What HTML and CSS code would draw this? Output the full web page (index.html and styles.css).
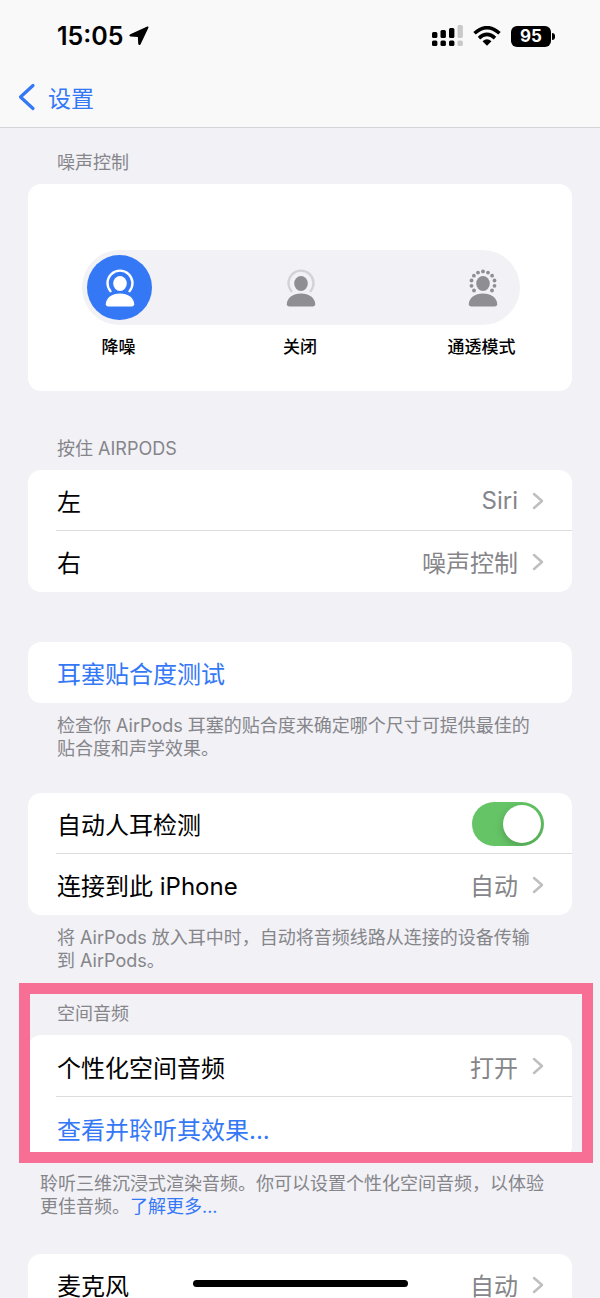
FILE: index.html
```html
<!DOCTYPE html>
<html lang="zh-CN">
<head>
<meta charset="utf-8">
<meta name="viewport" content="width=device-width, initial-scale=1">
<title>AirPods</title>
<link rel="stylesheet" href="styles.css">
</head>
<body>
<svg class="defs" aria-hidden="true">
  <symbol id="chevron" viewBox="0 0 12 18"><path d="M2 2l8 7-8 7" fill="none" stroke="currentColor" stroke-width="2.500" stroke-linecap="round" stroke-linejoin="round"/></symbol>
  <symbol id="person" viewBox="0 0 30 40">
    <ellipse cx="15" cy="15.500" rx="6.800" ry="7.400"/>
    <path d="M.8 36.300C.8 30 7 25.500 15 25.500s14.200 4.500 14.200 10.800Q29.200 38.400 27 38.400H3Q.8 38.400.8 36.300z"/>
  </symbol>
  <symbol id="arc" viewBox="0 0 30 40"><path d="M5.500 23.200A12.500 12.500 0 1 1 24.500 23.200" fill="none" stroke="currentColor" stroke-width="2.400" stroke-linecap="round"/></symbol>
</svg>
<div class="screen">
  <header class="top">
    <div class="status">
      <div class="clock">
        <time>15:05</time>
        <svg width="20" height="20" viewBox="0 0 20 20" aria-hidden="true"><path d="M18.300.6L1.300 8.200Q-.8 9.700 1.600 10.600L8.900 10.900 9.200 17.800Q10 20.200 11.600 18.200L19.400 1.700Q19.800.1 18.300.6z"/></svg>
      </div>
      <div class="signals">
        <svg width="32" height="22" viewBox="0 0 32 22" aria-hidden="true">
          <rect x="1" y="7" width="5.400" height="6" rx="1.500"/><rect x="9.500" y="5" width="5.400" height="8" rx="1.500"/><rect x="18" y="3" width="5.400" height="10" rx="1.500"/><rect x="26.500" y="0" width="5.400" height="13" rx="1.500" fill="#c9c9ca"/>
          <rect x="1" y="15.500" width="5.400" height="5.500" rx="1.500"/><rect x="9.500" y="15.500" width="5.400" height="5.500" rx="1.500"/><rect x="18" y="15.500" width="5.400" height="5.500" rx="1.500"/><rect x="26.500" y="15.500" width="5.400" height="5.500" rx="1.500" fill="#c9c9ca"/>
        </svg>
        <svg width="28" height="20" viewBox="0 0 28 20" aria-hidden="true">
          <g fill="none" stroke="#000" stroke-width="3.500"><path d="M1.500 7.300Q14-4 26.500 7.300"/><path d="M6 12.100Q14 4.800 22 12.100"/></g>
          <path d="M9.500 15.200Q14 11.400 18.500 15.200L14 19.800z"/>
        </svg>
        <div class="battery">95</div>
      </div>
    </div>
    <a class="back" href="#">
      <svg width="18" height="28" viewBox="0 0 18 28" aria-hidden="true"><path d="M15 2.500L2.500 14 15 25.500" fill="none" stroke="currentColor" stroke-width="3.200" stroke-linecap="round" stroke-linejoin="round"/></svg>
      <span>设置</span>
    </a>
  </header>

  <main class="content">
    <section class="group">
      <h2 class="heading">噪声控制</h2>
      <div class="card modes">
        <div class="pill">
          <label class="mode" for="anc"><input type="radio" name="mode" id="anc" checked>
            <svg viewBox="0 0 30 40" aria-hidden="true"><use href="#person"/><use href="#arc"/></svg></label>
          <label class="mode" for="off"><input type="radio" name="mode" id="off">
            <svg viewBox="0 0 30 40" aria-hidden="true"><use href="#person"/><use class="faint" href="#arc"/></svg></label>
          <label class="mode" for="clear"><input type="radio" name="mode" id="clear">
            <svg viewBox="0 0 30 40" aria-hidden="true"><use href="#person"/>
              <circle cx="6" cy="22.500" r="1.900"/><circle cx="3.500" cy="17.800" r="1.900"/><circle cx="3.500" cy="12.500" r="1.900"/><circle cx="5.900" cy="7.700" r="1.900"/><circle cx="10" cy="4.600" r="1.900"/><circle cx="15" cy="3.400" r="1.900"/><circle cx="20" cy="4.600" r="1.900"/><circle cx="24.100" cy="7.700" r="1.900"/><circle cx="26.500" cy="12.500" r="1.900"/><circle cx="26.500" cy="17.800" r="1.900"/><circle cx="24" cy="22.500" r="1.900"/></svg></label>
        </div>
        <div class="names">
          <label for="anc">降噪</label>
          <label for="off">关闭</label>
          <label for="clear">通透模式</label>
        </div>
      </div>
    </section>

    <section class="group hold">
      <h2 class="heading">按住 AIRPODS</h2>
      <div class="card">
        <button class="row" type="button"><span>左</span><span class="value">Siri</span><svg class="chevron" aria-hidden="true"><use href="#chevron"/></svg></button>
        <button class="row" type="button"><span>右</span><span class="value">噪声控制</span><svg class="chevron" aria-hidden="true"><use href="#chevron"/></svg></button>
      </div>
    </section>

    <section class="group fit">
      <div class="card">
        <button class="row action" type="button">耳塞贴合度测试</button>
      </div>
      <p class="note">检查你 AirPods 耳塞的贴合度来确定哪个尺寸可提供最佳的贴合度和声学效果。</p>
    </section>

    <section class="group detect">
      <div class="card">
        <label class="row" for="ear"><span>自动人耳检测</span><input class="switch" type="checkbox" role="switch" id="ear" checked></label>
        <button class="row" type="button"><span>连接到此 iPhone</span><span class="value">自动</span><svg class="chevron" aria-hidden="true"><use href="#chevron"/></svg></button>
      </div>
      <p class="note">将 AirPods 放入耳中时，自动将音频线路从连接的设备传输到 AirPods。</p>
    </section>

    <section class="group spatial">
      <h2 class="heading">空间音频</h2>
      <div class="card">
        <button class="row" type="button"><span>个性化空间音频</span><span class="value">打开</span><svg class="chevron" aria-hidden="true"><use href="#chevron"/></svg></button>
        <button class="row action" type="button">查看并聆听其效果...</button>
      </div>
    </section>
    <p class="note wide">聆听三维沉浸式渲染音频。你可以设置个性化空间音频，以体验更佳音频。<a href="#">了解更多...</a></p>

    <section class="group mic">
      <div class="card">
        <button class="row" type="button"><span>麦克风</span><span class="value">自动</span><svg class="chevron" aria-hidden="true"><use href="#chevron"/></svg></button>
      </div>
    </section>
  </main>
  <div class="home"></div>
</div>
</body>
</html>
```
FILE: styles.css
```css
* {
  box-sizing: border-box;
}

body {
  margin: 0;
  background: #f1f1f6;
  color: #000;
  font-family: Inter, "Noto Sans CJK SC", sans-serif;
  font-size: 24px;
}

.defs {
  position: absolute;
  width: 0;
  height: 0;
}

.screen {
  position: relative;
  display: flex;
  flex-direction: column;
  height: 100vh;
}

.top {
  flex: none;
  background: #f9f9fa;
  border-bottom: 1px solid #d3d3d8;
}

.status {
  display: flex;
  align-items: center;
  justify-content: space-between;
  height: 72px;
  padding: 0 45px 0 57px;
}

.clock,
.signals {
  display: flex;
  align-items: center;
}

.clock {
  gap: 6px;
  font-size: 25px;
  font-weight: 600;
}

.signals {
  gap: 10px;
}

.battery {
  position: relative;
  width: 40px;
  height: 21px;
  margin-right: 4px;
  border-radius: 6px;
  background: #000;
  color: #fff;
  font-size: 17px;
  font-weight: 700;
  line-height: 21px;
  text-align: center;
}

.battery::after {
  content: "";
  position: absolute;
  left: 41px;
  top: 7px;
  width: 3px;
  height: 7px;
  border-radius: 0 3px 3px 0;
  background: #000;
}

.back {
  display: inline-flex;
  align-items: center;
  gap: 12px;
  height: 50px;
  margin-bottom: 5px;
  padding-left: 18px;
  color: #3478f6;
  font-size: 23px;
  text-decoration: none;
  vertical-align: top;
}

.content {
  flex: 1;
  min-height: 0;
  padding: 24px 28px 0;
  overflow-y: auto;
  scrollbar-width: none;
}

.heading {
  margin: 0 0 10px;
  padding: 0 29px;
  color: #85858a;
  font-size: 18px;
  font-weight: 400;
  line-height: 22px;
}

.card {
  border-radius: 13px;
  background: #fff;
  overflow: hidden;
}

.modes {
  padding: 66px 52px 32px 54px;
}

.pill,
.names {
  display: flex;
  justify-content: space-between;
}

.pill {
  padding: 5px;
  border-radius: 38px;
  background: #f1f1f6;
}

.mode {
  position: relative;
  display: flex;
  align-items: center;
  justify-content: center;
  width: 65px;
  height: 65px;
  border-radius: 50%;
  color: #8e8e93;
}

.mode:has(:checked) {
  background: #3478f6;
  color: #fff;
}

.mode input {
  position: absolute;
  inset: 0;
  margin: 0;
  opacity: 0;
}

.mode svg {
  width: 30px;
  height: 40px;
  fill: currentColor;
}

.faint {
  color: #d3d3d7;
}

.names {
  margin: 10px 2px 0 0;
  font-size: 17px;
  font-weight: 500;
  line-height: 24px;
}

.names label {
  width: 73px;
  text-align: center;
  white-space: nowrap;
}

.row {
  position: relative;
  display: flex;
  align-items: center;
  width: 100%;
  height: 61px;
  padding: 0 28px 0 29px;
  border: 0;
  background: none;
  color: inherit;
  font: inherit;
  text-align: left;
}

.row + .row::before {
  content: "";
  position: absolute;
  top: -1px;
  left: 28px;
  right: 0;
  height: 1px;
  background: #dcdcdf;
}

.action,
.note a {
  color: #3478f6;
}

.value {
  margin-left: auto;
  color: #85858a;
}

.chevron {
  width: 12px;
  height: 18px;
  margin-left: 14px;
  color: #bfbfc2;
}

.switch {
  appearance: none;
  width: 72px;
  height: 44px;
  margin: 0 0 0 auto;
  padding: 3px;
  border-radius: 22px;
  background: #e9e9eb;
  overflow: hidden;
}

.switch::before {
  content: "";
  display: block;
  width: 38px;
  height: 38px;
  border-radius: 50%;
  background: #fff;
  box-shadow: 0 3px 8px rgba(0, 0, 0, 0.2);
}

.switch:checked {
  background: #65c466;
}

.switch:checked::before {
  margin-left: auto;
}

.note {
  margin: 11px 0 0;
  padding: 0 28px 0 29px;
  color: #85858a;
  font-size: 18px;
  line-height: 23px;
}

.note a {
  text-decoration: none;
}

.hold {
  margin-top: 47px;
}

.fit {
  margin-top: 50px;
}

.detect {
  margin-top: 33px;
}

.spatial {
  position: relative;
  margin-top: 31px;
}

.spatial::after {
  content: "";
  position: absolute;
  inset: -20px -21px -4px -9px;
  border: 11px solid #f76f95;
  pointer-events: none;
}

.spatial .row {
  height: 62px;
}

.wide {
  margin-top: 13px;
  padding: 0 20px 0 12px;
}

.mic {
  margin-top: 36px;
}

.home {
  position: absolute;
  bottom: 11px;
  left: 50%;
  width: 215px;
  height: 7px;
  margin-left: -107px;
  border-radius: 4px;
  background: #000;
}
```
